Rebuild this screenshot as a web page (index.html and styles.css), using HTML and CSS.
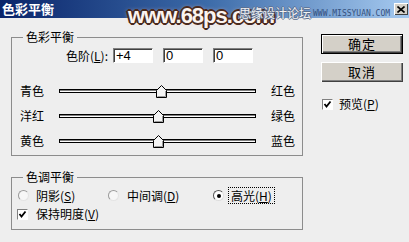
FILE: index.html
```html
<!DOCTYPE html>
<html lang="zh-CN">
<head>
  <meta charset="UTF-8" />
  <meta name="viewport" content="width=device-width, initial-scale=1.0"/>
  <title>色彩平衡</title>
  <link rel="stylesheet" href="styles.css">
</head>
<body>

  <div class="dialog">
    <div class="titlebar">
      <span class="title">色彩平衡</span>
      <span class="close">
        <svg width="8" height="7" viewBox="0 0 8 7"><path d="M0.5 0.5 L7.5 6.5 M7.5 0.5 L0.5 6.5" stroke="#000" stroke-width="1.6" fill="none"/></svg>
      </span>
      <!-- watermark printed over the screenshot -->
      <div class="watermark">
        <span class="wm-site">www.68ps.com</span>
        <span class="wm-forum">思缘设计论坛</span>
        <span class="wm-url">WWW.MISSYUAN.COM</span>
      </div>
    </div>

    <div class="content">
      <div class="groups">
        <fieldset class="group">
          <legend>色彩平衡</legend>
          <div class="levels">
            <span class="levels-label">色阶(<u>L</u>):</span>
            <input type="text" class="level" value="+4">
            <input type="text" class="level" value="0">
            <input type="text" class="level" value="0">
          </div>

          <div class="slider-row">
            <span class="left-label">青色</span>
            <div class="track">
              <span class="thumb" style="left: 52%">
                <svg width="11" height="13" viewBox="0 0 11 13"><polygon points="0.5,5.5 5.5,0.5 10.5,5.5 10.5,12.5 0.5,12.5" fill="#f4f4f4" stroke="#000" stroke-width="1"/><path d="M9.5 6 L9.5 11.5 L1.5 11.5" stroke="#9a9a9a" fill="none"/></svg>
              </span>
            </div>
            <span class="right-label">红色</span>
          </div>

          <div class="slider-row">
            <span class="left-label">洋红</span>
            <div class="track">
              <span class="thumb" style="left: 50%">
                <svg width="11" height="13" viewBox="0 0 11 13"><polygon points="0.5,5.5 5.5,0.5 10.5,5.5 10.5,12.5 0.5,12.5" fill="#f4f4f4" stroke="#000" stroke-width="1"/><path d="M9.5 6 L9.5 11.5 L1.5 11.5" stroke="#9a9a9a" fill="none"/></svg>
              </span>
            </div>
            <span class="right-label">绿色</span>
          </div>

          <div class="slider-row last">
            <span class="left-label">黄色</span>
            <div class="track">
              <span class="thumb" style="left: 50%">
                <svg width="11" height="13" viewBox="0 0 11 13"><polygon points="0.5,5.5 5.5,0.5 10.5,5.5 10.5,12.5 0.5,12.5" fill="#f4f4f4" stroke="#000" stroke-width="1"/><path d="M9.5 6 L9.5 11.5 L1.5 11.5" stroke="#9a9a9a" fill="none"/></svg>
              </span>
            </div>
            <span class="right-label">蓝色</span>
          </div>
        </fieldset>

        <fieldset class="group tone-group">
          <legend>色调平衡</legend>
          <div class="radios">
            <label class="radio"><span class="radio-dot"></span><span>阴影(<u>S</u>)</span></label>
            <label class="radio"><span class="radio-dot"></span><span>中间调(<u>D</u>)</span></label>
            <label class="radio radio-on"><span class="radio-dot"></span><span class="focus">高光(<u>H</u>)</span></label>
          </div>
          <label class="check keep">
            <span class="box"><svg width="9" height="9" viewBox="0 0 9 9"><polyline points="1.5,4 3.5,6.5 7.5,1.5" stroke="#000" stroke-width="1.8" fill="none"/></svg></span>
            <span>保持明度(<u>V</u>)</span>
          </label>
        </fieldset>
      </div>

      <div class="side">
        <button class="btn btn-default">确定</button>
        <button class="btn">取消</button>
        <label class="check preview">
          <span class="box"><svg width="9" height="9" viewBox="0 0 9 9"><polyline points="1.5,4 3.5,6.5 7.5,1.5" stroke="#000" stroke-width="1.8" fill="none"/></svg></span>
          <span>预览(<u>P</u>)</span>
        </label>
      </div>
    </div>
  </div>

</body>
</html>
```

FILE: styles.css
```css
* {
  box-sizing: border-box;
}

body {
  margin: 0;
  background: #eeeeee;
  font-family: "Noto Sans CJK SC", "Liberation Sans", sans-serif;
  font-size: 12px;
  color: #000;
}

.dialog {
  position: relative;
  width: 409px;
  height: 242px;
  overflow: hidden;
}

/* title bar */
.titlebar {
  position: relative;
  display: flex;
  align-items: center;
  height: 18px;
  background: linear-gradient(to right, #0a246a 0%, #3b6aa8 50%, #a6caf0 100%);
}

.title {
  padding-left: 2px;
  color: #fff;
  font-weight: bold;
  font-size: 13px;
  line-height: 18px;
}

.close {
  display: flex;
  align-items: center;
  justify-content: center;
  width: 14px;
  height: 12px;
  margin-left: auto;
  margin-right: 1px;
  background: #d4d0c8;
  box-shadow: inset 1px 1px #fff, inset -1px -1px #404040;
}

.watermark {
  position: absolute;
  top: 0;
  left: 0;
  right: 0;
  height: 32px;
  pointer-events: none;
}

.wm-site {
  position: absolute;
  left: 128px;
  top: 4px;
  font: bold 22px/24px "Liberation Sans", sans-serif;
  letter-spacing: -1px;
  color: #fbf4f0;
  text-shadow: 1px 1px 0 #4a2a1e, -1px -1px 0 #4a2a1e, 1px -1px 0 #4a2a1e, -1px 1px 0 #4a2a1e,
    2px 0 0 #4a2a1e, -2px 0 0 #4a2a1e, 0 2px 0 #4a2a1e, 0 -2px 0 #4a2a1e,
    0 0 5px rgba(255, 210, 200, 0.9);
}

.wm-forum {
  position: absolute;
  left: 239px;
  top: 5px;
  font-size: 12px;
  line-height: 16px;
  color: #f2f2f2;
  text-shadow: 1px 0 0 #5b6f90, -1px 0 0 #5b6f90, 0 1px 0 #5b6f90, 0 -1px 0 #5b6f90;
}

.wm-url {
  position: absolute;
  left: 313px;
  top: 9px;
  font: 8px/10px "DejaVu Sans Mono", monospace;
  color: #34507e;
}

/* body */
.content {
  display: flex;
  padding: 12px 0 0 11px;
}

.groups {
  width: 292px;
}

.group {
  margin: 0;
  padding: 0;
  min-width: 0;
  border: 1px solid #8c8c8c;
}

.group legend {
  margin-left: 11px;
  padding: 0 3px;
  line-height: 14px;
}

.tone-group {
  margin-top: 14px;
}

.levels {
  display: flex;
  align-items: center;
  height: 15px;
  margin-top: 4px;
  margin-bottom: 15px;
}

.levels-label {
  width: 96px;
  margin-right: 5px;
  text-align: right;
  line-height: 15px;
}

.level {
  width: 40px;
  height: 15px;
  margin: 0 10px 0 0;
  padding: 0 2px;
  border: 1px solid;
  border-color: #808080 #fff #fff #808080;
  box-shadow: inset 1px 1px #404040;
  background: #fff;
  font: 13px/13px "Liberation Sans", sans-serif;
  color: #000;
}

.slider-row {
  display: flex;
  align-items: center;
  height: 25px;
}

.slider-row.last {
  margin-bottom: 2px;
}

.left-label {
  width: 47px;
  padding-left: 8px;
}

.track {
  position: relative;
  width: 197px;
  height: 4px;
  border: 1px solid #000;
  background: #fff;
  box-shadow: inset 0 1px #808080;
}

.thumb {
  position: absolute;
  top: -5px;
  margin-left: -5px;
  width: 11px;
  height: 13px;
  line-height: 0;
}

.right-label {
  margin-left: 15px;
}

/* tone balance */
.radios {
  display: grid;
  grid-template-columns: 90px 105px auto;
  align-items: center;
  height: 14px;
  margin-top: 4px;
  padding-left: 6px;
}

.radio {
  display: flex;
  align-items: center;
  gap: 7px;
  line-height: 14px;
}

.radio + .radio {
  gap: 8px;
}

.radio-dot {
  display: flex;
  align-items: center;
  justify-content: center;
  width: 11px;
  height: 11px;
  border-radius: 50%;
  border: 1px solid;
  border-color: #9a9a9a #e4e4e4 #e4e4e4 #9a9a9a;
  background: #f7f7f7;
}

.radio.radio-on {
  gap: 5px;
}

.radio-on .radio-dot {
  border-color: #555 #ddd #ddd #555;
  background: #fff;
}

.radio-on .radio-dot::after {
  content: "";
  width: 4px;
  height: 4px;
  border-radius: 50%;
  background: #000;
}

.focus {
  padding: 0 2px;
  outline: 1px dotted #000;
  line-height: 15px;
}

.check {
  display: flex;
  align-items: center;
  gap: 8px;
  line-height: 14px;
}

.box {
  display: flex;
  align-items: center;
  justify-content: center;
  width: 11px;
  height: 11px;
  border: 1px solid;
  border-color: #808080 #fff #fff #808080;
  background: #fff;
  line-height: 0;
}

.keep {
  margin-top: 5px;
  margin-bottom: 8px;
  padding-left: 5px;
}

/* side buttons */
.side {
  display: flex;
  flex-direction: column;
  align-items: flex-start;
  margin-left: 18px;
  padding-top: 4px;
}

.btn {
  width: 82px;
  height: 20px;
  padding: 0;
  border: none;
  background: #d4d0c8;
  font-family: inherit;
  font-size: 13px;
  line-height: 18px;
  letter-spacing: 1px;
  color: #000;
  box-shadow: inset 1px 1px #fff, inset -1px -1px #404040, inset -2px -2px #808080;
}

.btn + .btn {
  margin-top: 8px;
}

.btn-default {
  border: 1px solid #000;
}

.preview {
  margin-top: 15px;
  margin-left: 1px;
  gap: 6px;
}
```
